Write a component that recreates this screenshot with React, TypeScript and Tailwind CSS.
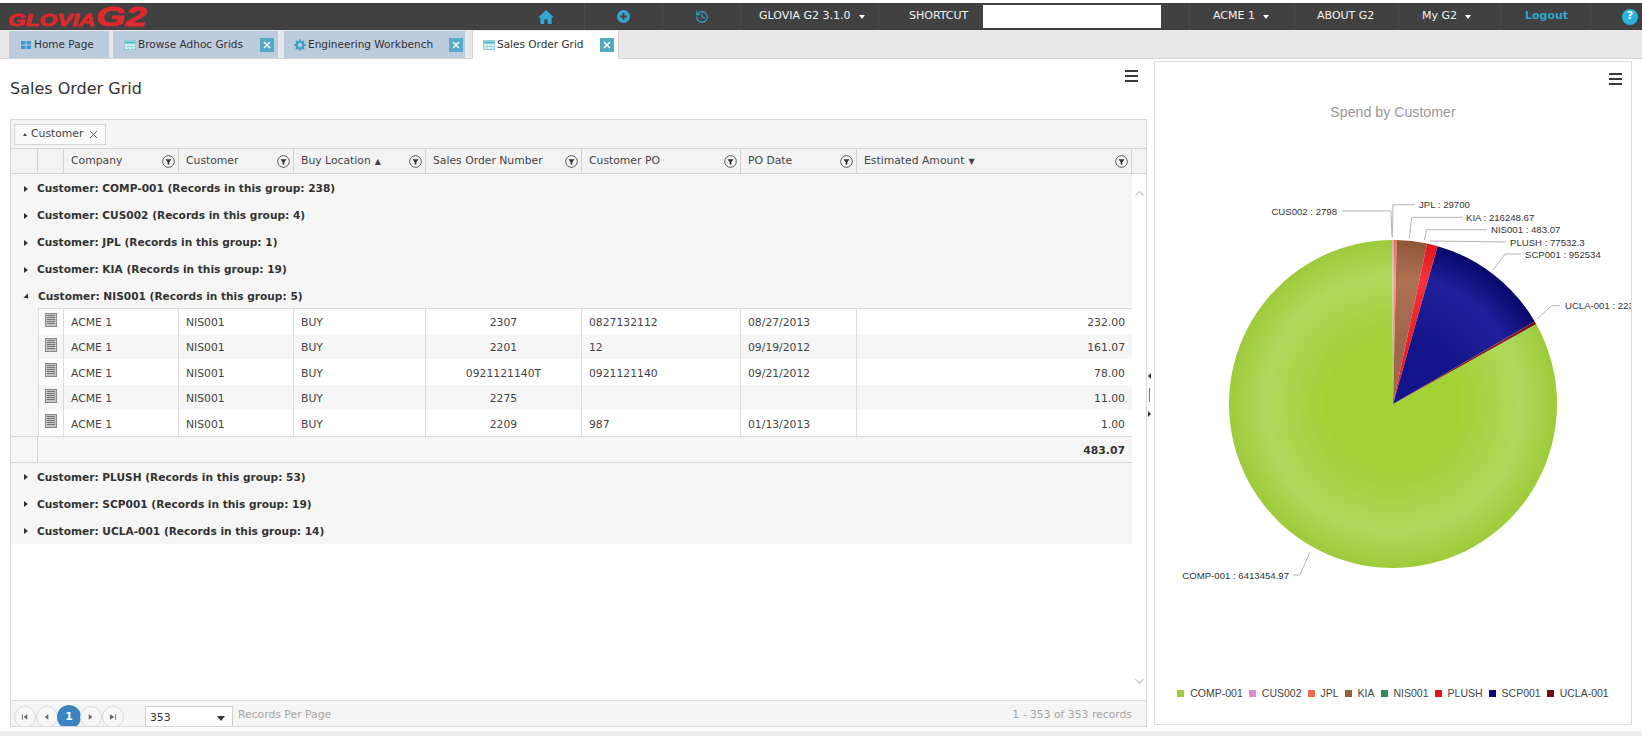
import { ChevronDown, ChevronUp, History } from 'lucide-react';

const uiFont = 'font-["DejaVu_Sans",sans-serif]';
const columnTemplate = 'grid-cols-[27px_26px_115px_115px_132px_156px_159px_116px_275px_13px]';
const detailTemplate = 'grid-cols-[26px_115px_115px_132px_156px_159px_116px_275px]';

const columns = [
  { label: 'Company' },
  { label: 'Customer' },
  { label: 'Buy Location', sort: '▲' },
  { label: 'Sales Order Number' },
  { label: 'Customer PO' },
  { label: 'PO Date' },
  { label: 'Estimated Amount', sort: '▼' },
];

const groupsBefore = [
  { name: 'COMP-001', count: 238 },
  { name: 'CUS002', count: 4 },
  { name: 'JPL', count: 1 },
  { name: 'KIA', count: 19 },
];

const groupsAfter = [
  { name: 'PLUSH', count: 53 },
  { name: 'SCP001', count: 19 },
  { name: 'UCLA-001', count: 14 },
];

const orders = [
  { number: '2307', po: '0827132112', date: '08/27/2013', amount: '232.00' },
  { number: '2201', po: '12', date: '09/19/2012', amount: '161.07' },
  { number: '0921121140T', po: '0921121140', date: '09/21/2012', amount: '78.00' },
  { number: '2275', po: '', date: '', amount: '11.00' },
  { number: '2209', po: '987', date: '01/13/2013', amount: '1.00' },
];

const legend = [
  { label: 'COMP-001', color: 'bg-[#a2cb3f]' },
  { label: 'CUS002', color: 'bg-[#d98fd8]' },
  { label: 'JPL', color: 'bg-[#ec6b52]' },
  { label: 'KIA', color: 'bg-[#95603c]' },
  { label: 'NIS001', color: 'bg-[#2e8b57]' },
  { label: 'PLUSH', color: 'bg-[#e8141c]' },
  { label: 'SCP001', color: 'bg-[#0a0a78]' },
  { label: 'UCLA-001', color: 'bg-[#6e0f14]' },
];

function polar(angle: number, r = 164) {
  const rad = (angle * Math.PI) / 180;
  return [r * Math.sin(rad), -r * Math.cos(rad)];
}

function slice(from: number, to: number) {
  const [x1, y1] = polar(from);
  const [x2, y2] = polar(to);
  const large = to - from > 180 ? 1 : 0;
  return `M0 0L${x1} ${y1}A164 164 0 ${large} 1 ${x2} ${y2}Z`;
}

function Logo() {
  return (
    <div className='flex w-[137px] items-end italic font-black text-[#dc2a2c] font-["Liberation_Sans",sans-serif] leading-none [-webkit-text-stroke:0.8px_#dc2a2c]'>
      <span className="inline-block w-[88px] origin-bottom-left scale-x-[1.42] text-[16px]">GLOVIA</span>
      <span className="inline-block origin-bottom-left scale-x-[1.4] text-[27px] leading-[24px]">G2</span>
    </div>
  );
}

function NavCell({ className = '', children }: { className?: string; children?: React.ReactNode }) {
  return (
    <div className={`flex h-full items-center border-r border-[#4a4a4a] ${className}`}>
      {children}
    </div>
  );
}

function Caret() {
  return <span className="ml-2 inline-block border-x-[3.5px] border-t-[4px] border-x-transparent border-t-white" />;
}

function TopBar() {
  return (
    <div className={`flex h-[27px] items-center bg-[#414141] text-[11px] text-[#f2f2f2] ${uiFont}`}>
      <div className="flex w-[507px] items-center pl-[8px]">
        <Logo />
      </div>
      <NavCell className="w-[78px] justify-center">
        <svg width="16" height="14" viewBox="0 0 16 14" fill="#35a9d6">
          <path d="M8 0L16 7.4H13.6V14H9.7V9.4H6.3V14H2.4V7.4H0Z" />
        </svg>
      </NavCell>
      <NavCell className="w-[78px] justify-center">
        <svg width="13" height="13" viewBox="0 0 13 13">
          <circle cx="6.5" cy="6.5" r="6.5" fill="#35a9d6" />
          <path d="M6.5 3v7M3 6.5h7" stroke="#414141" strokeWidth="2" />
        </svg>
      </NavCell>
      <NavCell className="w-[78px] justify-center">
        <History size={14} strokeWidth={2.2} className="text-[#2f9cc4]" />
      </NavCell>
      <NavCell className="w-[138px] pl-[18px]">
        GLOVIA G2 3.1.0
        <Caret />
      </NavCell>
      <div className="flex w-[104px] pl-[30px]">SHORTCUT</div>
      <input className="h-[23px] w-[178px] bg-white" readOnly />
      <NavCell className="w-[29px]" />
      <NavCell className="w-[105px] pl-[23px]">
        ACME 1
        <Caret />
      </NavCell>
      <NavCell className="w-[104px] pl-[22px]">ABOUT G2</NavCell>
      <NavCell className="w-[102px] pl-[23px]">
        My G2
        <Caret />
      </NavCell>
      <NavCell className="w-[90px] pl-[24px] font-bold text-[#2ea6cf]">Logout</NavCell>
      <div className="flex flex-1 justify-end pr-[4px]">
        <span className="flex size-[16px] items-center justify-center rounded-full bg-[#27b5dc] text-[11px] font-bold text-white">
          ?
        </span>
      </div>
    </div>
  );
}

function TabGlyph({ kind }: { kind: 'blocks' | 'grid' | 'gear' }) {
  if (kind === 'gear') {
    return (
      <svg width="12" height="12" viewBox="0 0 12 12" className="mr-[2px]">
        <circle cx="6" cy="6" r="3.4" fill="none" stroke="#3aa0c8" strokeWidth="2.4" />
        <path d="M6 0v2M6 10v2M0 6h2M10 6h2M1.8 1.8l1.4 1.4M8.8 8.8l1.4 1.4M1.8 10.2l1.4-1.4M8.8 3.2l1.4-1.4" stroke="#3aa0c8" strokeWidth="1.4" />
      </svg>
    );
  }
  if (kind === 'blocks') {
    return (
      <svg width="12" height="10" viewBox="0 0 12 10" className="mr-[2px]" fill="#3f97d2">
        <path d="M1 1h4.5v3.5H1zM6.5 1H11v3.5H6.5zM1 5.5h4.5V9H1zM6.5 5.5H11V9H6.5z" />
      </svg>
    );
  }
  return (
    <svg width="12" height="10" viewBox="0 0 12 10" className="mr-[2px]">
      <rect x="0.5" y="0.5" width="11" height="9" fill="#dff2f5" stroke="#8fcbd6" />
      <path d="M1 1.5h10v2H1z" fill="#3fb3c9" />
      <path d="M4 3.5v6M8 3.5v6M1 6.5h10" stroke="#8fcbd6" strokeWidth="0.8" />
    </svg>
  );
}

function CloseBox() {
  return (
    <span className="ml-auto flex size-[14px] items-center justify-center bg-[#54a9c6] text-white">
      <svg width="8" height="8" viewBox="0 0 8 8" stroke="currentColor" strokeWidth="1.4">
        <path d="M1 1l6 6M7 1L1 7" />
      </svg>
    </span>
  );
}

function TabBar() {
  return (
    <div className={`flex h-[29px] items-end gap-[4px] border-b border-[#d4d4d4] bg-[#e8e8e8] pl-[9px] text-[10.5px] text-[#333] ${uiFont}`}>
      <div className="flex h-[27px] w-[100px] items-center bg-[#bccbdd] pl-[11px]">
        <TabGlyph kind="blocks" />
        Home Page
      </div>
      <div className="flex h-[27px] w-[165px] items-center bg-[#bccbdd] pl-[11px] pr-[4px]">
        <TabGlyph kind="grid" />
        Browse Adhoc Grids
        <CloseBox />
      </div>
      <div className="ml-[2px] flex h-[27px] w-[181px] items-center bg-[#bccbdd] pl-[10px] pr-[2px]">
        <TabGlyph kind="gear" />
        Engineering Workbench
        <CloseBox />
      </div>
      <div className="relative top-px ml-[3px] flex h-[28px] w-[147px] items-center border-x border-[#d4d4d4] bg-white pl-[10px] pr-[4px]">
        <TabGlyph kind="grid" />
        Sales Order Grid
        <CloseBox />
      </div>
    </div>
  );
}

function Hamburger() {
  return (
    <svg width="13" height="12" viewBox="0 0 13 12" fill="#3a3a3a">
      <path d="M0 0h13v2H0zM0 5h13v2H0zM0 10h13v2H0z" />
    </svg>
  );
}

function FilterIcon() {
  return (
    <svg width="13" height="13" viewBox="0 0 13 13">
      <circle cx="6.5" cy="6.5" r="5.8" fill="#f7f7f7" stroke="#555" />
      <path d="M3.4 4.2h6.2L7.4 7v2.6H5.6V7z" fill="#333" />
    </svg>
  );
}

function DocIcon() {
  return (
    <svg width="12" height="14" viewBox="0 0 12 14">
      <rect x="0.5" y="0.5" width="11" height="13" fill="#c4c4c4" stroke="#8a8a8a" />
      <path d="M2 2.5h8M2 4.5h8M2 6.5h8M2 8.5h8M2 10.5h8" stroke="#777" />
    </svg>
  );
}

function GroupRow({ name, count, open = false }: { name: string; count: number; open?: boolean }) {
  return (
    <div className="flex h-[27px] items-center bg-[#f6f6f6] pl-[13px] pt-[2px] font-bold text-[#333]">
      {open ? (
        <span className="mr-[8px] size-0 -rotate-45 border-x-[3.5px] border-t-[4px] border-x-transparent border-t-[#333]" />
      ) : (
        <span className="mr-[9px] size-0 border-y-[3.5px] border-l-[4px] border-y-transparent border-l-[#333]" />
      )}
      <span className="text-[10.6px]">
        Customer: {name} (Records in this group: {count})
      </span>
    </div>
  );
}

function OrderRows() {
  return (
    <div className="ml-[27px]">
      {orders.map((order, index) => (
        <div
          key={order.number}
          className={`grid h-[25.6px] ${detailTemplate} items-center ${index % 2 ? 'bg-[#f6f6f6]' : 'bg-white'} ${index === 0 ? 'border-t border-[#d6d6d6]' : ''}`}
        >
          <div className="flex h-full justify-center border-x border-[#dcdcdc] pt-[4px]">
            <DocIcon />
          </div>
          <div className="flex h-full items-center border-r border-[#dcdcdc] px-[7px] pt-[4px]">ACME 1</div>
          <div className="flex h-full items-center border-r border-[#dcdcdc] px-[7px] pt-[4px]">NIS001</div>
          <div className="flex h-full items-center border-r border-[#dcdcdc] px-[7px] pt-[4px]">BUY</div>
          <div className="flex h-full items-center justify-center border-r border-[#dcdcdc] pt-[4px]">{order.number}</div>
          <div className="flex h-full items-center border-r border-[#dcdcdc] px-[7px] pt-[4px]">{order.po}</div>
          <div className="flex h-full items-center border-r border-[#dcdcdc] px-[7px] pt-[4px]">{order.date}</div>
          <div className="flex h-full items-center justify-end px-[7px] pt-[4px]">{order.amount}</div>
        </div>
      ))}
    </div>
  );
}

function PagerGlyph({ kind }: { kind: string }) {
  const paths: Record<string, string> = {
    first: 'M1 1h1v6H1zM7 1v6L3 4z',
    prev: 'M6 1v6L2 4z',
    next: 'M2 1v6l4-3z',
    last: 'M7 1h1v6H7zM1 1v6l5-3z',
  };
  return (
    <svg width="8" height="8" viewBox="0 0 9 8" fill="#666">
      <path d={paths[kind]} />
    </svg>
  );
}

function Pager() {
  const buttons = ['first', 'prev', 'page', 'next', 'last'];
  return (
    <div className="flex h-[26px] items-start overflow-hidden border-t border-[#dcdcdc] bg-[#f5f5f5] pl-[3px] pr-[14px]">
      <div className="flex w-[131px] items-center pt-[4px]">
        {buttons.map((b) =>
          b === 'page' ? (
            <span key={b} className="-mx-px flex size-[24px] items-center justify-center rounded-full bg-[#3a84c2] font-bold text-white">
              1
            </span>
          ) : (
            <span key={b} className="flex size-[22px] items-center justify-center rounded-full border border-[#dcdcdc] bg-[#f7f7f7]">
              <PagerGlyph kind={b} />
            </span>
          ),
        )}
      </div>
      <div className="mt-[5px] flex h-[24px] w-[88px] items-center justify-between border border-[#d0d0d0] bg-white pl-[4px] pr-[7px] text-[#333]">
        353
        <span className="size-0 border-x-[4px] border-t-[5px] border-x-transparent border-t-[#333]" />
      </div>
      <span className="ml-[5px] pt-[6px] text-[#a6a6a6]">Records Per Page</span>
      <span className="ml-auto pt-[6px] text-[#a6a6a6]">1 - 353 of 353 records</span>
    </div>
  );
}

function OrderGrid() {
  return (
    <div className={`flex min-h-0 flex-1 flex-col border border-[#d8d8d8] text-[10.8px] text-[#444] ${uiFont}`}>
      <div className="flex h-[28px] items-center bg-[#f5f5f5] pl-[3px]">
        <div className="flex h-[21px] w-[92px] items-center border border-[#d4d4d4] bg-[#fafafa] pl-[8px] text-[#444]">
          <span className="mr-[4px] size-0 border-x-[2.5px] border-b-[3px] border-x-transparent border-b-[#444]" />
          Customer
          <svg width="9" height="9" viewBox="0 0 9 9" className="ml-[6px]" stroke="#666">
            <path d="M1 1l7 7M8 1L1 8" />
          </svg>
        </div>
      </div>
      <div className={`grid h-[26px] ${columnTemplate} items-center border-y border-[#d4d4d4] bg-[#f3f3f3] text-[#444]`}>
        <div className="h-full border-r border-[#d4d4d4]" />
        <div className="h-full border-r border-[#d4d4d4]" />
        {columns.map((col) => (
          <div key={col.label} className="flex h-full items-center justify-between border-r border-[#d4d4d4] pl-[7px] pr-[3px]">
            <span>
              {col.label}
              {col.sort && <span className="ml-[4px] text-[8px]">{col.sort}</span>}
            </span>
            <FilterIcon />
          </div>
        ))}
        <div />
      </div>
      <div className="flex min-h-0 flex-1">
        <div className="w-[1121px]">
          {groupsBefore.map((g) => (
            <GroupRow key={g.name} name={g.name} count={g.count} />
          ))}
          <GroupRow name="NIS001" count={5} open />
          <div className="-mt-px bg-[#f6f6f6]">
            <OrderRows />
            <div className="flex h-[27px] border-y border-[#d6d6d6]">
              <div className="w-[27px] border-r border-[#d6d6d6]" />
              <div className="flex flex-1 items-center justify-end pr-[7px] pt-[4px] font-bold text-[#333]">483.07</div>
            </div>
          </div>
          {groupsAfter.map((g) => (
            <GroupRow key={g.name} name={g.name} count={g.count} />
          ))}
        </div>
        <div className="flex flex-1 flex-col items-center justify-between pb-[11px] pt-[12px] text-[#c4c4c4]">
          <ChevronUp size={15} />
          <ChevronDown size={15} />
        </div>
      </div>
      <Pager />
    </div>
  );
}

function SpendChart() {
  const labels = [
    { text: 'CUS002 : 2798', x: 182, y: 112.5, anchor: 'end', line: 'M187 109H236L237 135' },
    { text: 'JPL : 29700', x: 264, y: 106, anchor: 'start', line: 'M260 102.7H238L237.5 135' },
    { text: 'KIA : 216248.67', x: 311, y: 119, anchor: 'start', line: 'M307.7 115.3H256.7L254.3 136.3' },
    { text: 'NIS001 : 483.07', x: 336, y: 131, anchor: 'start', line: 'M332 127.7H271.7L269.3 138' },
    { text: 'PLUSH : 77532.3', x: 355, y: 143.5, anchor: 'start', line: 'M351 140L275 139' },
    { text: 'SCP001 : 952534', x: 370, y: 156, anchor: 'start', line: 'M365.7 152H350L338.3 168' },
    { text: 'UCLA-001 : 223', x: 410, y: 207, anchor: 'start', line: 'M405 203.7H396.7L381.7 217.3' },
    { text: 'COMP-001 : 6413454.97', x: 134, y: 476.5, anchor: 'end', line: 'M138 473H145L155 450' },
  ];
  const slices = [
    { from: 60.8, to: 359.8, id: 'pieGreen' },
    { from: -0.2, to: 0.2, id: 'piePink' },
    { from: 0.2, to: 1.3, id: 'pieCoral' },
    { from: 1.3, to: 12, id: 'pieBrown' },
    { from: 12, to: 15.8, id: 'pieRed' },
    { from: 15.8, to: 59.8, id: 'pieNavy' },
    { from: 59.8, to: 60.8, id: 'pieMaroon' },
  ];
  const tones = [
    { id: 'pieGreen', inner: '#a2d136', mid: '#aed95c', rim: '#9ecb3a' },
    { id: 'piePink', inner: '#e6a3e5', mid: '#eab0e9', rim: '#d98fd8' },
    { id: 'pieCoral', inner: '#f08a72', mid: '#f29a85', rim: '#ec6b52' },
    { id: 'pieBrown', inner: '#a2674a', mid: '#ad7151', rim: '#8f5636' },
    { id: 'pieRed', inner: '#f01e26', mid: '#f5323a', rim: '#e1141a' },
    { id: 'pieNavy', inner: '#14148a', mid: '#20209a', rim: '#07076b' },
    { id: 'pieMaroon', inner: '#7c1a1e', mid: '#86242a', rim: '#6e0f14' },
  ];
  return (
    <svg viewBox="0 0 476 600" className="h-[600px] w-[476px]" fontFamily="Liberation Sans, sans-serif">
      <defs>
        {tones.map((t) => (
          <radialGradient key={t.id} id={t.id} gradientUnits="userSpaceOnUse" cx="0" cy="0" r="164">
            <stop offset="0.4" stopColor={t.inner} />
            <stop offset="0.78" stopColor={t.mid} />
            <stop offset="1" stopColor={t.rim} />
          </radialGradient>
        ))}
      </defs>
      <g transform="translate(238 302)">
        {slices.map((s) => (
          <path key={s.id} d={slice(s.from, s.to)} fill={`url(#${s.id})`} />
        ))}
      </g>
      {labels.map((l) => (
        <g key={l.text}>
          <path d={l.line} fill="none" stroke="#b5b5b5" />
          <text x={l.x} y={l.y} textAnchor={l.anchor as 'start' | 'end'} fontSize="9.6" fill="#333">
            {l.text}
          </text>
        </g>
      ))}
    </svg>
  );
}

function ChartPanel() {
  return (
    <div className='relative flex h-[664px] w-[478px] flex-col items-center overflow-hidden border border-[#dcdcdc] font-["Liberation_Sans",sans-serif]'>
      <div className="absolute right-[9px] top-[11px]">
        <Hamburger />
      </div>
      <div className="pt-[40px] text-[14.2px] leading-[20px] text-[#999]">Spend by Customer</div>
      <div className="-mt-[20px] h-[600px] w-[476px]">
        <SpendChart />
      </div>
      <div className="-mt-[16px] flex items-center gap-[6px] text-[10.5px] text-[#444]">
        {legend.map((item) => (
          <div key={item.label} className="flex items-center gap-[6px]">
            <span className={`size-[7px] ${item.color}`} />
            {item.label}
          </div>
        ))}
      </div>
    </div>
  );
}

function Splitter() {
  return (
    <div className="flex w-[7px] flex-col items-start justify-center gap-[9px] pl-[1px]">
      <span className="size-0 border-y-[3px] border-r-[3px] border-y-transparent border-r-[#333]" />
      <span className="ml-[1px] h-[14px] w-px bg-[#777]" />
      <span className="size-0 border-y-[3px] border-l-[3px] border-y-transparent border-l-[#333]" />
    </div>
  );
}

export default function App() {
  return (
    <div className="flex h-screen w-full flex-col overflow-hidden bg-white pt-[3px]">
      <TopBar />
      <TabBar />
      <div className="flex min-h-0 flex-1">
        <div className="flex w-[1147px] flex-col pb-[4px] pl-[10px]">
          <div className={`flex h-[60px] items-start justify-between pr-[9px] ${uiFont}`}>
            <h1 className="pt-[20px] text-[16px] leading-[20px] text-[#333]">Sales Order Grid</h1>
            <div className="pt-[11px]">
              <Hamburger />
            </div>
          </div>
          <OrderGrid />
        </div>
        <Splitter />
        <div className="pt-[2px]">
          <ChartPanel />
        </div>
      </div>
      <div className="h-[5px] bg-[#ececec]" />
    </div>
  );
}
